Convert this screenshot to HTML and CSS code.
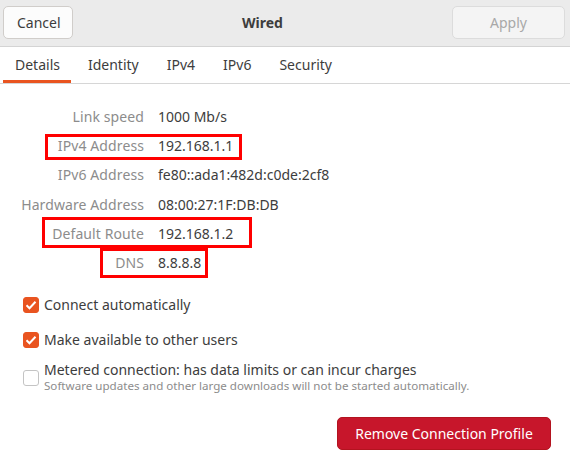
FILE: index.html
```html
<!DOCTYPE html>
<html lang="en">
<head>
    <meta charset="UTF-8">
    <title>Wired</title>
    <link rel="stylesheet" href="styles.css">
</head>
<body>
    <header class="titlebar">
        <button class="btn">Cancel</button>
        <h1>Wired</h1>
        <button class="btn" disabled>Apply</button>
    </header>

    <nav class="tabs">
        <span class="tab active">Details</span>
        <span class="tab">Identity</span>
        <span class="tab">IPv4</span>
        <span class="tab">IPv6</span>
        <span class="tab">Security</span>
    </nav>

    <main>
        <dl class="details">
            <dt>Link speed</dt><dd>1000 Mb/s</dd>
            <dt>IPv4 Address</dt><dd>192.168.1.1</dd>
            <dt>IPv6 Address</dt><dd>fe80::ada1:482d:c0de:2cf8</dd>
            <dt>Hardware Address</dt><dd>08:00:27:1F:DB:DB</dd>
            <dt>Default Route</dt><dd>192.168.1.2</dd>
            <dt>DNS</dt><dd>8.8.8.8</dd>

            <!-- cajas rojas de anotacion -->
            <span class="mark mark-ipv4"></span>
            <span class="mark mark-route"></span>
            <span class="mark mark-dns"></span>
        </dl>

        <ul class="checks">
            <li>
                <span class="box checked"></span>
                <span>Connect automatically</span>
            </li>
            <li>
                <span class="box checked"></span>
                <span>Make available to other users</span>
            </li>
            <li class="metered">
                <span class="box"></span>
                <span>
                    Metered connection: has data limits or can incur charges
                    <small>Software updates and other large downloads will not be started automatically.</small>
                </span>
            </li>
        </ul>

        <footer>
            <button class="danger">Remove Connection Profile</button>
        </footer>
    </main>
</body>
</html>
```

FILE: styles.css
```css
* {
    box-sizing: border-box;
}

body {
    margin: 0;
    width: 570px;
    height: 468px;
    background: #fff;
    color: #3d3d3d;
    font-family: "Noto Sans", "Open Sans", sans-serif;
    font-size: 14px;
    overflow: hidden;
}

.titlebar {
    height: 47px;
    display: flex;
    align-items: center;
    justify-content: space-between;
    padding: 0 5px 1px 3px;
    background: #ebebeb;
    border-bottom: 1px solid #d4d4d4;

    h1 {
        margin: 0;
        font-size: 14px;
        font-weight: 700;
        color: #3d3d3d;
    }
}

.btn {
    height: 33px;
    padding: 0 13px;
    font: inherit;
    color: #3d3d3d;
    background: #fcfcfc;
    border: 1px solid #d0cdca;
    border-radius: 5px;

    &:first-child {
        width: 70px;
    }

    &[disabled] {
        width: 113px;
        color: #a8a8a8;
        background: #f4f4f4;
        border-color: #dcdcdc;
    }
}

.tabs {
    height: 37px;
    display: flex;
    gap: 5px;
    padding-left: 3px;
    border-bottom: 1px solid #d6d6d6;
}

.tab {
    display: flex;
    align-items: center;
    padding: 2px 11px 0 12px;
    border-bottom: 3px solid transparent;
    color: #3d3d3d;

    &.active {
        border-bottom-color: #e95420;
    }
}

main {
    padding-top: 18px;
}

.details {
    position: relative;
    margin: 0;
    display: grid;
    grid-template-columns: 144px auto;
    grid-auto-rows: 29.2px;
    column-gap: 14px;
    align-items: center;

    dt {
        text-align: right;
        color: #8c8c8c;
        letter-spacing: 0.1px;
    }

    dd {
        margin: 0;
    }
}

/* anotaciones encima del contenido */
.mark {
    position: absolute;
    border: 3px solid #f00;
}

.mark-ipv4 {
    left: 45px;
    top: 32px;
    width: 197px;
    height: 26px;
}

.mark-route {
    left: 42px;
    top: 115px;
    width: 210px;
    height: 31px;
}

.mark-dns {
    left: 100px;
    top: 146px;
    width: 108px;
    height: 30px;
}

.checks {
    list-style: none;
    margin: 20px 0 0;
    padding: 0 0 0 23px;
    display: flex;
    flex-direction: column;
    gap: 19px;

    li {
        display: flex;
        align-items: center;
        gap: 5px;
        line-height: 16px;
    }

    .metered {
        margin-top: -5px;
    }

    small {
        display: block;
        font-size: 11.6px;
        line-height: 15px;
        color: #8c8c8c;
    }
}

.box {
    flex: none;
    width: 16px;
    height: 16px;
    border: 1px solid #c4c4c4;
    border-radius: 3px;
    background: #fff;

    &.checked {
        border-color: #e95420;
        background: #e95420 url("data:image/svg+xml;utf8,<svg xmlns='http://www.w3.org/2000/svg' viewBox='0 0 16 16'><path d='M3.5 8.2l3 3 6-6.4' fill='none' stroke='white' stroke-width='2'/></svg>") center / 16px no-repeat;
    }
}

footer {
    display: flex;
    justify-content: flex-end;
    padding: 24px 19px 0 0;
}

.danger {
    width: 214px;
    height: 33px;
    font: inherit;
    color: #fff;
    background: #c7162b;
    border: 1px solid #b3131f;
    border-radius: 5px;
}
```
